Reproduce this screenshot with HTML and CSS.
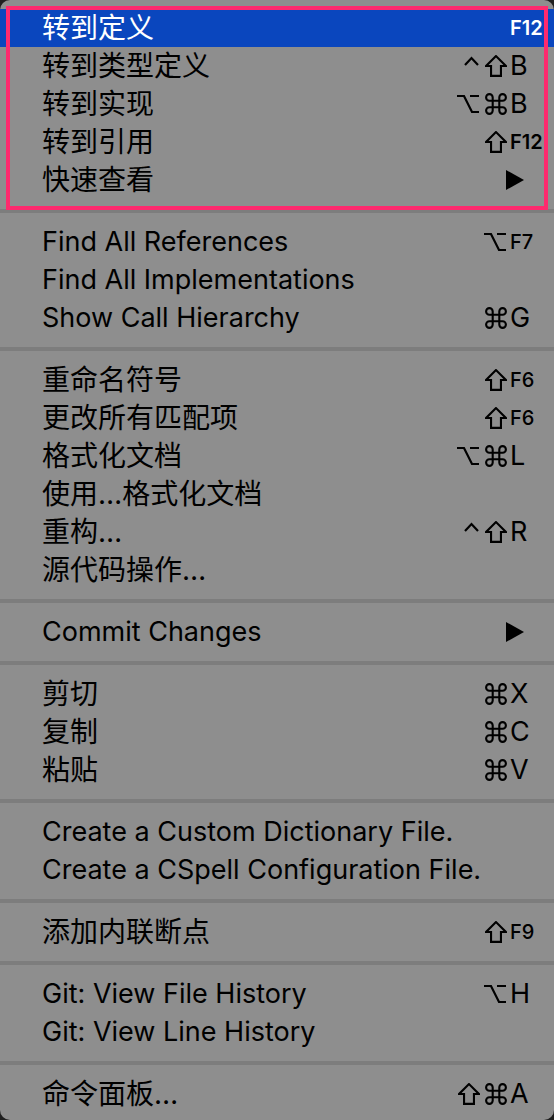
FILE: index.html
```html
<!DOCTYPE html>
<html lang="zh-CN">
<head>
<meta charset="utf-8">
<title>Context menu</title>
<link rel="stylesheet" href="styles.css">
</head>
<body>
<svg class="defs" width="0" height="0" aria-hidden="true">
  <defs>
    <symbol id="cmd" viewBox="1 1 20 20"><path d="M8 8 V5 A3 3 0 1 0 5 8 H17 A3 3 0 1 0 14 5 V17 A3 3 0 1 0 17 14 H5 A3 3 0 1 0 8 17 Z" fill="none" stroke="currentColor" stroke-width="1.9" stroke-linejoin="round"/></symbol>
    <symbol id="shift" viewBox="1 1 20 20"><path d="M11 2 L2 11 H6.5 V20 H15.5 V11 H20 Z" fill="none" stroke="currentColor" stroke-width="1.9" stroke-linejoin="miter"/></symbol>
    <symbol id="opt" viewBox="0 0 24 20"><path d="M1 2 H8 L16 18 H23 M14 2 H23" fill="none" stroke="currentColor" stroke-width="2.2"/></symbol>
    <symbol id="ctrl" viewBox="0 0 17 22"><path d="M2 10 L8.5 3 L15 10" fill="none" stroke="currentColor" stroke-width="2.2"/></symbol>
  </defs>
</svg>

<div class="menu">
  <div class="item active">
    <span class="label zh">转到定义</span>
    <span class="keys"><span class="mods"></span><span class="key fk bold">F12</span></span>
  </div>
  <div class="item">
    <span class="label zh">转到类型定义</span>
    <span class="keys"><span class="mods"><svg class="m m-ctrl"><use href="#ctrl"/></svg><svg class="m m-shift"><use href="#shift"/></svg></span><span class="key">B</span></span>
  </div>
  <div class="item">
    <span class="label zh">转到实现</span>
    <span class="keys"><span class="mods"><svg class="m m-opt"><use href="#opt"/></svg><svg class="m m-cmd"><use href="#cmd"/></svg></span><span class="key">B</span></span>
  </div>
  <div class="item">
    <span class="label zh">转到引用</span>
    <span class="keys"><span class="mods"><svg class="m m-shift"><use href="#shift"/></svg></span><span class="key fk bold">F12</span></span>
  </div>
  <div class="item">
    <span class="label zh">快速查看</span>
    <span class="keys"><svg class="arrow" viewBox="0 0 18 20"><path d="M0 0 L18 10 L0 20 Z"/></svg></span>
  </div>

  <div class="sep"></div>

  <div class="item">
    <span class="label">Find All References</span>
    <span class="keys"><span class="mods"><svg class="m m-opt"><use href="#opt"/></svg></span><span class="key fk">F7</span></span>
  </div>
  <div class="item">
    <span class="label">Find All Implementations</span>
  </div>
  <div class="item">
    <span class="label">Show Call Hierarchy</span>
    <span class="keys"><span class="mods"><svg class="m m-cmd"><use href="#cmd"/></svg></span><span class="key">G</span></span>
  </div>

  <div class="sep"></div>

  <div class="item">
    <span class="label zh">重命名符号</span>
    <span class="keys"><span class="mods"><svg class="m m-shift"><use href="#shift"/></svg></span><span class="key fk">F6</span></span>
  </div>
  <div class="item">
    <span class="label zh">更改所有匹配项</span>
    <span class="keys"><span class="mods"><svg class="m m-shift"><use href="#shift"/></svg></span><span class="key fk">F6</span></span>
  </div>
  <div class="item">
    <span class="label zh">格式化文档</span>
    <span class="keys"><span class="mods"><svg class="m m-opt"><use href="#opt"/></svg><svg class="m m-cmd"><use href="#cmd"/></svg></span><span class="key">L</span></span>
  </div>
  <div class="item">
    <span class="label zh">使用…格式化文档</span>
  </div>
  <div class="item">
    <span class="label zh">重构…</span>
    <span class="keys"><span class="mods"><svg class="m m-ctrl"><use href="#ctrl"/></svg><svg class="m m-shift"><use href="#shift"/></svg></span><span class="key">R</span></span>
  </div>
  <div class="item">
    <span class="label zh">源代码操作…</span>
  </div>

  <div class="sep"></div>

  <div class="item">
    <span class="label">Commit Changes</span>
    <span class="keys"><svg class="arrow" viewBox="0 0 18 20"><path d="M0 0 L18 10 L0 20 Z"/></svg></span>
  </div>

  <div class="sep"></div>

  <div class="item">
    <span class="label zh">剪切</span>
    <span class="keys"><span class="mods"><svg class="m m-cmd"><use href="#cmd"/></svg></span><span class="key">X</span></span>
  </div>
  <div class="item">
    <span class="label zh">复制</span>
    <span class="keys"><span class="mods"><svg class="m m-cmd"><use href="#cmd"/></svg></span><span class="key">C</span></span>
  </div>
  <div class="item">
    <span class="label zh">粘贴</span>
    <span class="keys"><span class="mods"><svg class="m m-cmd"><use href="#cmd"/></svg></span><span class="key">V</span></span>
  </div>

  <div class="sep"></div>

  <div class="item">
    <span class="label">Create a Custom Dictionary File.</span>
  </div>
  <div class="item">
    <span class="label">Create a CSpell Configuration File.</span>
  </div>

  <div class="sep"></div>

  <div class="item">
    <span class="label zh">添加内联断点</span>
    <span class="keys"><span class="mods"><svg class="m m-shift"><use href="#shift"/></svg></span><span class="key fk">F9</span></span>
  </div>

  <div class="sep"></div>

  <div class="item">
    <span class="label">Git: View File History</span>
    <span class="keys"><span class="mods"><svg class="m m-opt"><use href="#opt"/></svg></span><span class="key">H</span></span>
  </div>
  <div class="item">
    <span class="label">Git: View Line History</span>
  </div>

  <div class="sep"></div>

  <div class="item">
    <span class="label zh">命令面板…</span>
    <span class="keys"><span class="mods"><svg class="m m-shift"><use href="#shift"/></svg><svg class="m m-cmd"><use href="#cmd"/></svg></span><span class="key">A</span></span>
  </div>

  <div class="annot" aria-hidden="true"></div>
</div>
</body>
</html>
```

FILE: styles.css
```css
html, body {
  margin: 0;
  padding: 0;
  background: #1f1f1f;
}

.defs {
  position: absolute;
  width: 0;
  height: 0;
  overflow: hidden;
}

.menu {
  position: relative;
  width: 554px;
  height: 1120px;
  box-sizing: border-box;
  padding: 9px 0 9px 0;
  background: #8e8e8e;
  border-radius: 10px;
  overflow: hidden;
  font-family: "Inter", "Noto Sans CJK SC", sans-serif;
  font-size: 27px;
  color: #000;
  display: flex;
  flex-direction: column;
}

.item {
  height: 38px;
  flex: none;
  display: flex;
  align-items: center;
  padding: 0 10px 0 42px;
}

.item.active {
  background: #0a46be;
  color: #fff;
}

.label {
  flex: 1;
  white-space: nowrap;
  line-height: 38px;
}

.label.zh {
  font-size: 28px;
}

.keys {
  display: flex;
  align-items: center;
}

.mods {
  display: flex;
  align-items: center;
  justify-content: flex-end;
  gap: 5px;
  margin-right: 3px;
}

.m {
  display: block;
  color: inherit;
}

.m-cmd { width: 22px; height: 22px; }
.m-shift { width: 22px; height: 22px; }
.m-opt { width: 24px; height: 20px; }
.m-ctrl { width: 17px; height: 22px; }

.key {
  width: 34px;
  text-align: left;
  line-height: 38px;
}

.key.fk {
  font-size: 20px;
  font-weight: 500;
}

.key.bold {
  font-weight: 600;
}

.arrow {
  width: 18px;
  height: 20px;
  margin-right: 20px;
  fill: currentColor;
}

.sep {
  flex: none;
  height: 4px;
  margin: 10px 0;
  background: #7d7d7d;
}

.annot {
  position: absolute;
  left: 6px;
  top: 6px;
  width: 542px;
  height: 204px;
  box-sizing: border-box;
  border: 4px solid #fe2a6e;
  pointer-events: none;
}
```
